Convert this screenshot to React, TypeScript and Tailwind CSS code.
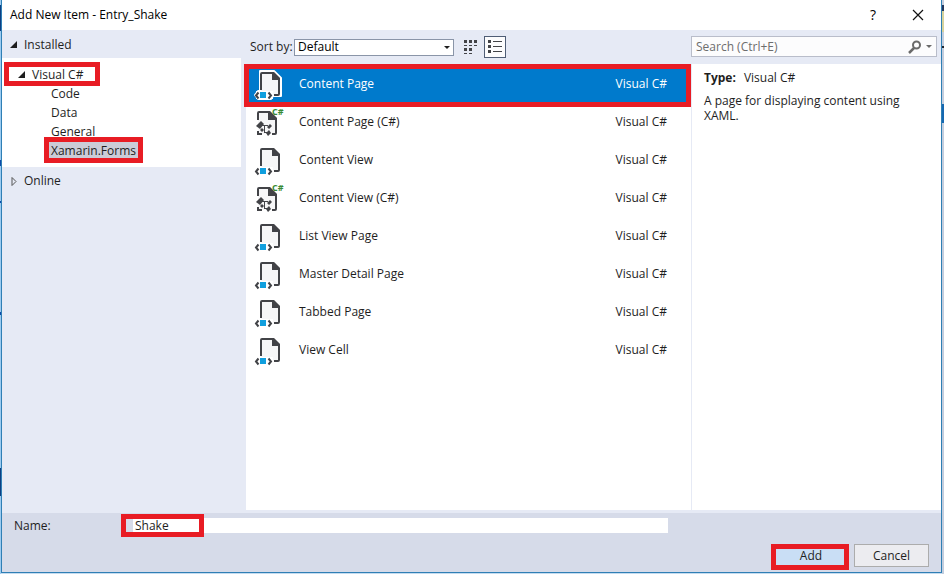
import React, { useState } from "react";

const items = [
  { name: "Content Page", code: false },
  { name: "Content Page (C#)", code: true },
  { name: "Content View", code: false },
  { name: "Content View (C#)", code: true },
  { name: "List View Page", code: false },
  { name: "Master Detail Page", code: false },
  { name: "Tabbed Page", code: false },
  { name: "View Cell", code: false },
];

function Mark({ className }: { className: string }) {
  return (
    <span
      aria-hidden="true"
      className={`pointer-events-none absolute z-10 border-5 border-[#e81c24] ${className}`}
    />
  );
}

function PageIcon({ selected }: { selected: boolean }) {
  return (
    <svg viewBox="0 -3 32 38" className="h-[38px] w-8" aria-hidden="true">
      {selected && (
        <path
          d="M6 3h14l7 7v18H19l-2 3H4l-3-4 3-4h2z"
          fill="#fff"
          stroke="#fff"
          strokeWidth="2"
          strokeLinejoin="round"
        />
      )}
      <path d="M7 5h12l6 6v16H7z" fill="#f6f6f7" />
      <path d="M7 22V6q0-1 1-1h11l6 6v15q0 1-1 1h-4" fill="none" stroke="#424347" strokeWidth="2" />
      <path d="M18 4h2l6 6v2h-8z" fill="#424347" />
      <path d="M2 23h17v8H2z" fill="#fff" />
      <path d="M4.500 24.500L2 27.500l2.500 3M14.500 24.500l2.500 3-2.500 3" fill="none" stroke="#424347" strokeWidth="2" />
      <path d="M6 24h6v6H6z" fill="#109fde" />
    </svg>
  );
}

function CodeIcon() {
  return (
    <svg viewBox="0 -3 32 38" className="h-[38px] w-8" aria-hidden="true">
      <path d="M4 6h11l7 7v15H4z" fill="#f6f6f7" />
      <path d="M4 14V7q0-1 1-1h10l7 7v14q0 1-1 1h-3M4 25v3h4" fill="none" stroke="#424347" strokeWidth="2" />
      <path d="M14 5h2l7 7v2h-9z" fill="#424347" />
      <g fill="#424347">
        <path d="M7 15l3 3-4 5-4-3z" />
        <path d="M13 21l3-3 2 2-3 3zM12 27l3-3 2 3-3 3zM6 24l2-2 2 2-2 2z" />
        <path d="M8 19h6v1h-3v6h3v1h-4v-7H8z" />
      </g>
      <text x="18" y="9" fontSize="9" fontWeight="700" fill="#388a34" className="font-['Open_Sans',sans-serif]">
        C#
      </text>
    </svg>
  );
}

function LeftEdge() {
  return (
    <div aria-hidden="true" className="flex w-px shrink-0 flex-col bg-[#9ccbf0]">
      <span className="mt-[5px] h-[26px] bg-[#0d3f82]" />
      <span className="mt-[129px] h-[6px] bg-[#0d4aa8]" />
      <span className="mt-[35px] h-[2px] bg-[#0d4aa8]" />
      <span className="mt-[109px] h-[3px] bg-[#0d4aa8]" />
      <span className="mt-[153px] h-[28px] bg-[#0d3f82]" />
    </div>
  );
}

function RightEdge() {
  return (
    <div aria-hidden="true" className="flex w-[2px] shrink-0 flex-col bg-[#c3cddd]">
      <span className="mt-[5px] h-[6px] bg-[#23365c]" />
      <span className="h-[21px] bg-[#d6d29b]" />
      <span className="mt-[14px] h-[2px] bg-[#20242c]" />
      <span className="mt-[56px] h-[19px] bg-[#1668b0]" />
    </div>
  );
}

export default function App() {
  const [selected, setSelected] = useState(0);
  return (
    <div className="flex min-h-screen bg-[#c5dcf0] font-['Open_Sans','Noto_Sans',sans-serif] text-xs text-[#1e1e1e]">
      <LeftEdge />
      <main className="mb-px flex min-w-0 grow flex-col border border-t-0 border-[#2f7fb5] bg-[#e6eaf5]">
        <header className="flex h-[30px] items-center justify-between bg-white pr-[17px] pl-2 text-black">
          <h1>Add New Item - Entry_Shake</h1>
          <div className="flex items-center gap-9">
            <button type="button" aria-label="Help" className="text-sm font-medium">?</button>
            <button type="button" aria-label="Close">
              <svg viewBox="0 0 12 12" className="h-3 w-3" stroke="#111" strokeWidth="1.200"><path d="M1 1l10 10M11 1L1 11" /></svg>
            </button>
          </div>
        </header>

        <div className="flex grow pb-[3px]">
          <nav className="flex w-[239px] shrink-0 flex-col">
            <button type="button" className="flex h-7 items-center gap-[6px] pt-px pl-2">
              <svg viewBox="0 0 8 8" className="h-2 w-2" fill="#1e1e1e"><path d="M7 0v7H0z" /></svg>
              Installed
            </button>
            <div className="flex h-[109px] flex-col items-start bg-white pt-[7px]">
              <div className="relative">
                <button type="button" className="flex h-[19px] items-center gap-[6px] pl-4">
                  <svg viewBox="0 0 8 8" className="h-2 w-2" fill="#1e1e1e"><path d="M7 0v7H0z" /></svg>
                  Visual C#
                </button>
                <Mark className="-top-[3px] left-[2px] h-6 w-24" />
              </div>
              <button type="button" className="ml-[49px] h-[19px]">Code</button>
              <button type="button" className="ml-[49px] h-[19px]">Data</button>
              <button type="button" className="ml-[49px] h-[19px]">General</button>
              <div className="relative ml-[47px] bg-[#cbccd7] px-[2px]">
                <button type="button" className="h-[19px]">Xamarin.Forms</button>
                <Mark className="-inset-x-[5px] -top-1 h-[26px]" />
              </div>
            </div>
            <button type="button" className="flex h-7 items-center gap-1 pl-[9px]">
              <svg viewBox="0 0 9 9" className="h-[9px] w-[9px]" fill="none" stroke="#555"><path d="M1 .5l4 4-4 4z" /></svg>
              Online
            </button>
          </nav>

          <section className="ml-[5px] flex min-w-0 grow flex-col">
            <div className="flex h-[34px] items-center pl-1">
              <label htmlFor="sort" className="w-11 whitespace-nowrap">Sort by:</label>
              <span className="relative flex">
                <select id="sort" className="h-[17px] w-40 appearance-none border border-[#8a95a8] bg-white pl-[3px] text-xs leading-none text-black">
                  <option>Default</option>
                </select>
                <svg viewBox="0 0 6 3" className="pointer-events-none absolute top-[7px] right-1 h-[3px] w-[6px]" fill="#1e1e1e"><path d="M0 0h6L3 3z" /></svg>
              </span>
              <button type="button" aria-label="Small icons" className="ml-[9px]">
                <svg viewBox="0 0 15 15" className="h-[15px] w-[15px]" fill="#424347">
                  <path d="M1 0h3v3H1zM6 0h3v3H6zM11 0h3v3h-3zM1 8h3v3H1zM6 8h3v3H6zM1 5h3v1H1zM6 5h3v1H6zM11 5h3v1h-3zM1 13h3v1H1zM6 13h3v1H6z" />
                </svg>
              </button>
              <button type="button" aria-label="List" className="ml-[6px] flex h-[22px] w-[22px] items-center justify-center border border-[#4f5d75] bg-[#fcfcfd]">
                <svg viewBox="0 0 16 14" className="h-[14px] w-4" fill="#424347">
                  <path d="M1 0h3v3H1zM1 5h3v3H1zM1 10h3v3H1zM6 1h9v1H6zM6 6h9v1H6zM6 11h9v1H6z" />
                </svg>
              </button>
            </div>
            <ul className="flex grow flex-col bg-white">
              {items.map((item, i) => (
                <li key={item.name} className="relative">
                  <button
                    type="button"
                    onClick={() => setSelected(i)}
                    className={`flex h-[38px] w-full items-center pr-6 pl-2 ${i === 0 ? "mt-px" : ""} ${i === selected ? "bg-[#007acc] text-white" : ""}`}
                  >
                    {item.code ? <CodeIcon /> : <PageIcon selected={i === selected} />}
                    <span className="ml-[13px] grow text-left">{item.name}</span>
                    <span>Visual C#</span>
                  </button>
                  {i === 0 && <Mark className="top-0 right-0 -left-[2px] h-[43px]" />}
                </li>
              ))}
            </ul>
          </section>

          <aside className="flex w-[250px] shrink-0 flex-col">
            <div className="flex h-[34px] items-center pr-1 pb-px">
              <label className="flex h-[21px] w-full items-center border border-[#b9bdca] bg-[#fcfcfd] pr-1 pl-1">
                <input aria-label="Search" placeholder="Search (Ctrl+E)" className="min-w-0 grow placeholder:text-[#6d6d6d] focus:outline-none" />
                <svg viewBox="0 0 14 14" className="h-[14px] w-[14px]" fill="none" stroke="#6a6a6a"><circle cx="8.500" cy="5" r="3.500" strokeWidth="2" /><path d="M6 8l-5 5" strokeWidth="2.500" /></svg>
                <svg viewBox="0 0 6 3" className="ml-1 h-[3px] w-[6px]" fill="#6a6a6a"><path d="M0 0h6L3 3z" /></svg>
              </label>
            </div>
            <div className="flex grow flex-col border-l border-[#e6eaf5] bg-white px-3 pt-[5px]">
              <p className="leading-[18px]"><b className="mr-2">Type:</b>Visual C#</p>
              <p className="mt-[6px] leading-[15px]">A page for displaying content using XAML.</p>
            </div>
          </aside>
        </div>

        <footer className="flex flex-col bg-[#d6dbe9] pb-[5px]">
          <div className="flex h-[25px] items-center pl-3">
            <label htmlFor="item-name" className="w-[119px]">Name:</label>
            <div className="relative w-[535px]">
              <input id="item-name" defaultValue="Shake" className="block h-[15px] w-full bg-white pl-[2px] focus:outline-none" />
              <Mark className="-top-1 -left-3 h-[23px] w-[83px]" />
            </div>
          </div>
          <div className="mt-[6px] flex items-center justify-end gap-[5px] pr-3">
            <div className="relative h-[23px] w-[78px]">
              <button type="button" className="h-full w-full bg-[#c9def5] pl-[2px]">Add</button>
              <Mark className="inset-x-0 top-0 h-[26px]" />
            </div>
            <button type="button" className="h-[23px] w-[75px] border border-[#acacac] bg-[#ececf0]">Cancel</button>
          </div>
        </footer>
      </main>
      <RightEdge />
    </div>
  );
}
